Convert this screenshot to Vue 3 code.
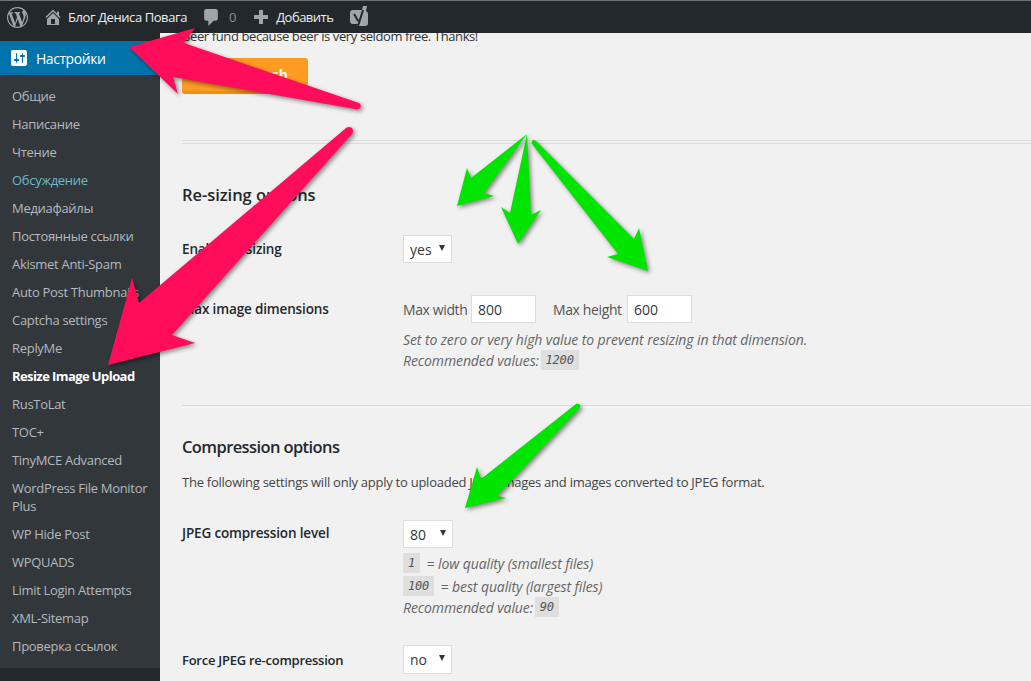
<script setup>
const menu = [
  { label: 'Общие' },
  { label: 'Написание' },
  { label: 'Чтение' },
  { label: 'Обсуждение', hover: true },
  { label: 'Медиафайлы' },
  { label: 'Постоянные ссылки' },
  { label: 'Akismet Anti-Spam' },
  { label: 'Auto Post Thumbnails' },
  { label: 'Captcha settings' },
  { label: 'ReplyMe' },
  { label: 'Resize Image Upload', current: true },
  { label: 'RusToLat' },
  { label: 'TOC+' },
  { label: 'TinyMCE Advanced' },
  { label: 'WordPress File Monitor Plus' },
  { label: 'WP Hide Post' },
  { label: 'WPQUADS' },
  { label: 'Limit Login Attempts' },
  { label: 'XML-Sitemap' },
  { label: 'Проверка ссылок' }
]
</script>

<template>
  <div class="page">
    <header class="topbar">
      <svg class="wp" viewBox="0 0 20 20"><path fill-rule="evenodd" d="M20 10c0-5.51-4.49-10-10-10C4.48 0 0 4.49 0 10c0 5.52 4.48 10 10 10 5.51 0 10-4.48 10-10zM7.78 15.37L4.37 6.22c.55-.02 1.17-.08 1.17-.08.5-.06.44-1.13-.06-1.11 0 0-1.45.11-2.37.11-.18 0-.37 0-.58-.01C4.12 2.69 6.87 1.11 10 1.11c2.33 0 4.45.87 6.05 2.34-.68-.11-1.65.39-1.65 1.58 0 .74.45 1.36.9 2.1.35.61.55 1.36.55 2.46 0 1.49-1.4 5-1.4 5l-3.03-8.37c.54-.02.82-.17.82-.17.5-.05.44-1.25-.06-1.22 0 0-1.44.12-2.38.12-.87 0-2.33-.12-2.33-.12-.5-.03-.56 1.2-.06 1.22l.92.08 1.26 3.41zM17.41 10c.24-.64.74-1.87.43-4.25.7 1.29 1.05 2.71 1.05 4.25 0 3.29-1.73 6.24-4.4 7.78.97-2.59 1.94-5.2 2.92-7.78zM6.1 18.09C3.12 16.65 1.11 13.53 1.11 10c0-1.3.23-2.48.72-3.59C3.25 10.3 4.67 14.2 6.1 18.09zm4.03-6.63l2.58 6.98c-.86.29-1.76.45-2.71.45-.79 0-1.57-.11-2.29-.33.81-2.38 1.62-4.74 2.42-7.1z"/></svg>
      <svg class="home" viewBox="0 0 20 20"><path fill-rule="evenodd" d="M16 8.5l1.53 1.53-1.06 1.06L10 4.62l-6.47 6.47-1.06-1.06L10 2.5l4 4v-2h2v4zm-6-2.46l6 5.99V18H4v-5.97zM12 17v-5H8v5h4z"/></svg>
      <span class="site">Блог Дениса Повага</span>
      <svg class="bubble" viewBox="0 0 20 20"><path d="M5 2h9c1.1 0 2 .9 2 2v7c0 1.1-.9 2-2 2h-2l-5 5v-5H5c-1.1 0-2-.9-2-2V4c0-1.1.9-2 2-2z"/></svg>
      <span class="count">0</span>
      <svg class="plus" viewBox="0 0 14 14"><path d="M5 0h4v5h5v4H9v5H5V9H0V5h5z"/></svg>
      <span class="add">Добавить</span>
      <svg class="yoast" viewBox="0 0 18 22"><path d="M3 4h9l1-4h4l-1 5c1 .6 2 1.6 2 3v9c0 2-1 3-3 3H7l1-2H3c-2 0-3-1-3-3V7c0-2 1-3 3-3z"/><path class="yoast-y" d="M4 8l4.2 7M13 4L8 20" fill="none"/></svg>
    </header>

    <div class="body">
      <aside class="sidebar">
        <div class="menu-head">
          <svg viewBox="0 0 20 20"><path fill-rule="evenodd" d="M18 16V4c0-1.1-.9-2-2-2H4c-1.1 0-2 .9-2 2v12c0 1.1.9 2 2 2h12c1.1 0 2-.9 2-2zM8 11h1c.55 0 1 .45 1 1s-.45 1-1 1H8v1.5c0 .28-.22.5-.5.5s-.5-.22-.5-.5V13H6c-.55 0-1-.45-1-1s.45-1 1-1h1V5.5c0-.28.22-.5.5-.5s.5.22.5.5V11zm5-2h-1c-.55 0-1-.45-1-1s.45-1 1-1h1V5.5c0-.28.22-.5.5-.5s.5.22.5.5V7h1c.55 0 1 .45 1 1s-.45 1-1 1h-1v5.5c0 .28-.22.5-.5.5s-.5-.22-.5-.5V9z"/></svg>
          <span>Настройки</span>
        </div>
        <ul class="submenu">
          <li v-for="item in menu" :key="item.label" :class="{ hover: item.hover, current: item.current }">{{ item.label }}</li>
        </ul>
      </aside>

      <main class="content">
        <p class="beer">Beer fund because beer is very seldom free. Thanks!</p>
        <button class="cash">Beer cash</button>
        <hr class="rule double" />

        <h3 class="first">Re-sizing options</h3>
        <div class="row enable">
          <label>Enable re-sizing</label>
          <div class="select"><select><option>yes</option></select></div>
        </div>
        <div class="row dims">
          <label>Max image dimensions</label>
          <div>
            <div class="inputs">
              <span>Max width</span><input value="800" />
              <span class="second">Max height</span><input value="600" />
            </div>
            <p class="hint first-hint">Set to zero or very high value to prevent resizing in that dimension.</p>
            <p class="hint">Recommended values: <code>1200</code></p>
          </div>
        </div>
        <hr class="rule" />

        <h3 class="compression">Compression options</h3>
        <p class="intro">The following settings will only apply to uploaded JPEG images and images converted to JPEG format.</p>
        <div class="row jpeg">
          <label>JPEG compression level</label>
          <div>
            <div class="select wide"><select><option>80</option></select></div>
            <p class="hint first-code"><code>1</code> = low quality (smallest files)</p>
            <p class="hint"><code>100</code> = best quality (largest files)</p>
            <p class="hint">Recommended value: <code>90</code></p>
          </div>
        </div>
        <div class="row force">
          <label>Force JPEG re-compression</label>
          <div class="select"><select><option>no</option></select></div>
        </div>
      </main>
    </div>

    <svg class="arrows" viewBox="0 0 1031 681">
      <g class="pink">
        <path d="M129 47L195 28L184 43L359 103Q362 105 360 108Q358 110 355 109L173 77L178 94Z" />
        <path d="M108 365L132 278L139 303L346 128Q349 126 352 128Q354 131 352 134L172 335L195 343Z" />
      </g>
      <g class="green">
        <path d="M457 206L467 168L471 178L527 134L484 193L494 196Z" />
        <path d="M527 134L531 215L541 210L518 244L501 207L510 213Z" />
        <path d="M648 271L607 257L618 254L532 144Q531 141 533 140Q535 140 536 141L634 239L639 228Z" />
        <path d="M465 508L477 467L481 479L576 404Q579 403 580 405Q581 407 579 409L497 496L506 498Z" />
      </g>
    </svg>
  </div>
</template>

<style>
html, body {
  margin: 0;
  overflow: hidden;
}
</style>

<style scoped>
.page {
  position: relative;
  width: 1031px;
  height: 681px;
  overflow: hidden;
  background: #f1f1f1;
  font-family: "Open Sans", "Noto Sans", sans-serif;
  font-size: 13px;
  letter-spacing: -0.25px;
  color: #444;
}

.topbar {
  position: relative;
  z-index: 2;
  height: 32px;
  border-top: 1px solid #6d7073;
  background: #23282d;
  display: flex;
  align-items: center;
  color: #eee;
}

.topbar svg {
  fill: #a0a5aa;
  flex: none;
}

.wp {
  width: 21px;
  height: 21px;
  margin-left: 7px;
}

.home {
  width: 20px;
  height: 20px;
  margin-left: 15px;
}

.site {
  margin-left: 5px;
  width: 133px;
  letter-spacing: -0.42px;
}

.bubble {
  width: 21px;
  height: 21px;
}

.count {
  margin-left: 7px;
  color: #8a8e92;
}

.plus {
  width: 14px;
  height: 14px;
  margin-left: 18px;
}

.add {
  margin-left: 8px;
  width: 74px;
  letter-spacing: -0.5px;
}

.yoast {
  width: 18px;
  height: 22px;
}

.topbar .yoast-y {
  stroke: #23282d;
  stroke-width: 2;
}

.body {
  display: flex;
  height: 648px;
}

.sidebar {
  width: 160px;
  flex: none;
  background: #23282d;
  padding-top: 8px;
  box-sizing: border-box;
}

.menu-head {
  height: 34px;
  background: #0073aa;
  color: #fff;
  font-size: 14px;
  letter-spacing: -0.45px;
  display: flex;
  align-items: center;
  padding-left: 9px;
  gap: 7px;
}

.menu-head svg {
  width: 20px;
  height: 20px;
  fill: #fff;
}

.submenu {
  list-style: none;
  margin: 0;
  padding: 7px 0 8px;
  background: #32373c;
  color: #b4b9be;
  letter-spacing: -0.3px;
}

.submenu li {
  padding: 5px 6px 5px 12px;
  line-height: 18px;
}

.submenu .hover {
  color: #6fb7cc;
}

.submenu .current {
  color: #fff;
  font-weight: 700;
  letter-spacing: -0.58px;
}

.content {
  flex: 1;
  padding-left: 22px;
  overflow: hidden;
  color: #444;
}

.beer {
  margin: -7px 0 0;
  line-height: 20px;
  color: #333;
  letter-spacing: -0.39px;
}

.cash {
  display: block;
  width: 126px;
  height: 36px;
  margin-top: 12px;
  padding: 0 20px 0 0;
  border: 0;
  border-bottom: 3px solid #ef8f16;
  border-radius: 3px;
  background: #ff9b22;
  color: #fff;
  font: 700 14px "Open Sans", sans-serif;
  text-align: right;
}

.rule {
  margin: 46px 0 0;
  height: 1px;
  border: 0;
  border-top: 1px solid #ddd;
  border-bottom: 1px solid #fafafa;
}

.rule.double {
  height: 2px;
  border-bottom: 1px solid #ddd;
}

h3 {
  margin: 0;
  font-size: 16.5px;
  font-weight: 600;
  letter-spacing: -0.05px;
  line-height: 22px;
  color: #23282d;
}

.first {
  margin-top: 40px;
}

.row {
  display: grid;
  grid-template-columns: 221px 1fr;
}

.row label {
  font-weight: 600;
  color: #23282d;
  line-height: 18px;
}

.enable {
  margin-top: 29px;
}

.enable label,
.dims label {
  margin-top: 5px;
  font-size: 13.5px;
  letter-spacing: -0.15px;
}

.dims {
  margin-top: 32px;
}

.select {
  position: relative;
  width: 49px;
  height: 28px;
}

.select.wide {
  width: 50px;
}

.select::after {
  content: "";
  position: absolute;
  right: 7px;
  top: 10px;
  border: 3.5px solid transparent;
  border-top: 6px solid #32373c;
  border-bottom: 0;
}

select {
  appearance: none;
  display: block;
  width: 100%;
  height: 100%;
  box-sizing: border-box;
  border: 1px solid #ddd;
  border-radius: 0;
  background: #fff;
  padding: 0 6px;
  font: inherit;
  font-size: 14px;
  color: #32373c;
}

.inputs {
  display: flex;
  align-items: center;
  color: #555;
  font-size: 14px;
  letter-spacing: -0.38px;
}

.inputs span {
  width: 68px;
}

.inputs span.second {
  width: 74px;
  margin-left: 17px;
}

input {
  box-sizing: border-box;
  width: 65px;
  height: 28px;
  border: 1px solid #ddd;
  background: #fff;
  padding: 0 6px;
  font: inherit;
  font-size: 14px;
  color: #32373c;
}

.hint {
  margin: 0;
  height: 21px;
  line-height: 21px;
  font-size: 14px;
  font-style: italic;
  letter-spacing: -0.1px;
  color: #666;
}

.first-hint {
  margin-top: 6px;
}

code {
  display: inline-block;
  padding: 0 5px;
  height: 20px;
  line-height: 20px;
  background: #dfdfdf;
  font-family: "DejaVu Sans Mono", "Liberation Mono", monospace;
  font-size: 12px;
  letter-spacing: -0.2px;
  color: #555;
  vertical-align: top;
  margin-right: 3px;
  margin-left: -2px;
}

.first-code code,
.first-code + .hint code {
  margin-left: 0;
}

.dims + .rule {
  margin-top: 34px;
}

.compression {
  margin-top: 28px;
  letter-spacing: -0.6px;
}

.intro {
  margin: 14px 0 0;
  line-height: 20px;
  color: #444;
}

.jpeg {
  margin-top: 28px;
}

.jpeg label {
  margin-top: 4px;
  font-size: 13.5px;
  letter-spacing: -0.15px;
}

.first-code {
  margin-top: 5px;
}

.first-code + .hint {
  margin-top: 2px;
}

.force {
  margin-top: 27px;
}

.force label {
  margin-top: 6px;
}

.force .select {
  height: 29px;
}

.arrows {
  position: absolute;
  left: 0;
  top: 0;
  width: 1031px;
  height: 681px;
  z-index: 3;
  pointer-events: none;
}

.pink {
  fill: #ff0d5b;
  filter: drop-shadow(2px 2px 2px rgba(0, 0, 0, 0.45));
}

.green {
  fill: #00e400;
  filter: drop-shadow(2px 2px 2px rgba(0, 0, 0, 0.45));
}
</style>
